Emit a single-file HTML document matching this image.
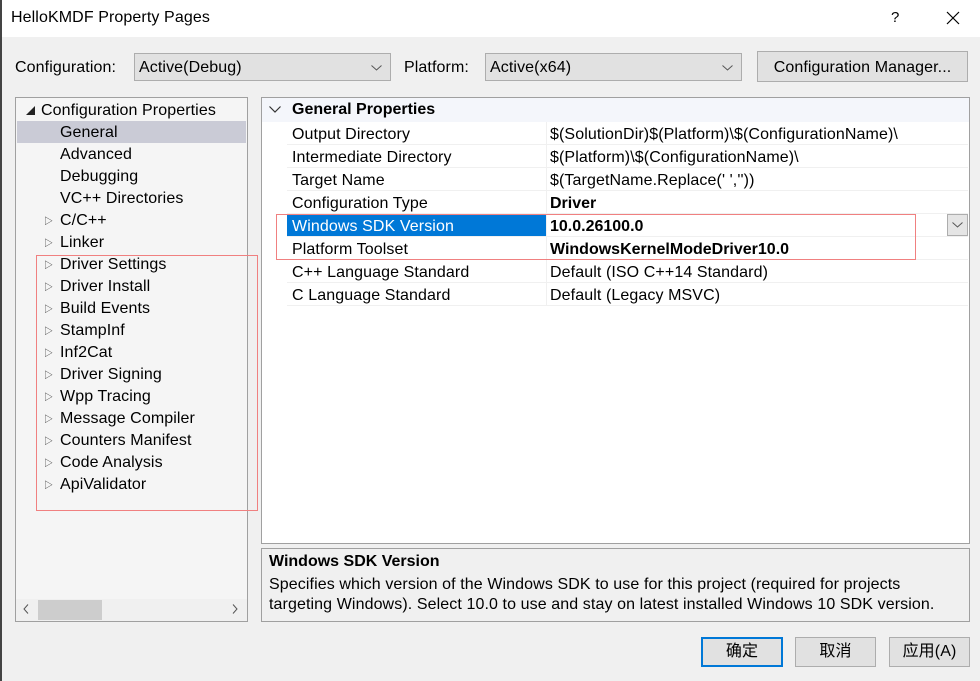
<!DOCTYPE html>
<html><head><meta charset="utf-8"><style>
*{box-sizing:border-box;margin:0;padding:0}
body{width:980px;height:681px;background:#f0f0f0;font-family:"Liberation Sans","Noto Sans CJK SC",sans-serif;font-size:16px;letter-spacing:0.1px;color:#000;position:relative;overflow:hidden}
.a{position:absolute;white-space:nowrap}
.combo{position:absolute;background:#e1e1e1;border:1px solid #adadad;height:28px;line-height:28px;padding-left:4px}
.combo svg{position:absolute;right:8px;top:11px}
.btn{position:absolute;background:#e1e1e1;border:1px solid #adadad;text-align:center}
.tr{position:absolute;left:60px;height:22px;line-height:24px}
.tri{position:absolute;left:44px;font-size:9px;color:#333}
.row{position:absolute;left:287px;width:681px;height:23px;line-height:25px;border-bottom:1px solid #f0f0f0}
.row .v{position:absolute;left:263px}
</style></head><body>
<div class="a" style="left:0;top:0;width:980px;height:37px;background:#fff"></div>
<div class="a" style="left:0;top:0;width:2px;height:681px;background:#444"></div>
<div class="a" style="left:11px;top:9px">HelloKMDF Property Pages</div>
<div class="a" style="left:891px;top:9px;font-size:15px">?</div>
<svg class="a" style="left:946px;top:11px" width="14" height="14"><path d="M1 1L13 13M13 1L1 13" stroke="#000" stroke-width="1.2"/></svg>

<div class="a" style="left:15px;top:59px">Configuration:</div>
<div class="combo" style="left:134px;top:53px;width:257px">Active(Debug)<svg width="11" height="6"><path d="M0.5 0.5L5.5 5L10.5 0.5" fill="none" stroke="#555"/></svg></div>
<div class="a" style="left:404px;top:59px">Platform:</div>
<div class="combo" style="left:485px;top:53px;width:257px">Active(x64)<svg width="11" height="6"><path d="M0.5 0.5L5.5 5L10.5 0.5" fill="none" stroke="#555"/></svg></div>
<div class="btn" style="left:757px;top:51px;width:211px;height:31px;line-height:31px">Configuration Manager...</div>

<div class="a" style="left:15px;top:97px;width:233px;height:525px;background:#f5f5f5;border:1px solid #a0a0a0"></div>
<div class="a" style="left:17px;top:121px;width:229px;height:22px;background:#cacbd6"></div>
<svg class="a" style="left:26px;top:106px" width="9" height="9"><path d="M9 0L9 9L0 9Z" fill="#222"/></svg>
<div class="tr" style="left:41px;top:99px">Configuration Properties</div>
<div class="tr" style="top:121px">General</div>
<div class="tr" style="top:143px">Advanced</div>
<div class="tr" style="top:165px">Debugging</div>
<div class="tr" style="top:187px">VC++ Directories</div>
<div class="tri" style="top:214px">▷</div><div class="tr" style="top:209px">C/C++</div>
<div class="tri" style="top:236px">▷</div><div class="tr" style="top:231px">Linker</div>
<div class="tri" style="top:258px">▷</div><div class="tr" style="top:253px">Driver Settings</div>
<div class="tri" style="top:280px">▷</div><div class="tr" style="top:275px">Driver Install</div>
<div class="tri" style="top:302px">▷</div><div class="tr" style="top:297px">Build Events</div>
<div class="tri" style="top:324px">▷</div><div class="tr" style="top:319px">StampInf</div>
<div class="tri" style="top:346px">▷</div><div class="tr" style="top:341px">Inf2Cat</div>
<div class="tri" style="top:368px">▷</div><div class="tr" style="top:363px">Driver Signing</div>
<div class="tri" style="top:390px">▷</div><div class="tr" style="top:385px">Wpp Tracing</div>
<div class="tri" style="top:412px">▷</div><div class="tr" style="top:407px">Message Compiler</div>
<div class="tri" style="top:434px">▷</div><div class="tr" style="top:429px;width:187px;overflow:hidden">Counters Manifest Preprocessor</div>
<div class="tri" style="top:456px">▷</div><div class="tr" style="top:451px">Code Analysis</div>
<div class="tri" style="top:478px">▷</div><div class="tr" style="top:473px">ApiValidator</div>
<div class="a" style="left:36px;top:255px;width:222px;height:256px;border:1px solid #f08080"></div>
<div class="a" style="left:16px;top:599px;width:231px;height:22px;background:#f0f0f0"></div>
<div class="a" style="left:38px;top:600px;width:64px;height:20px;background:#cdcdcd"></div>
<svg class="a" style="left:23px;top:604px" width="6" height="10"><path d="M5 0.5L1 5L5 9.5" fill="none" stroke="#555"/></svg>
<svg class="a" style="left:232px;top:604px" width="6" height="10"><path d="M1 0.5L5 5L1 9.5" fill="none" stroke="#555"/></svg>

<div class="a" style="left:261px;top:97px;width:709px;height:447px;background:#fff;border:1px solid #a0a0a0"></div>
<div class="a" style="left:262px;top:98px;width:707px;height:24px;background:#f4f6fb"></div>
<svg class="a" style="left:269px;top:106px" width="12" height="7"><path d="M0.5 0.5L6 6L11.5 0.5" fill="none" stroke="#333" stroke-width="1.2"/></svg>
<div class="a" style="left:292px;top:101px;font-weight:bold;letter-spacing:0">General Properties</div>
<div class="row" style="top:122px"><span style="margin-left:5px">Output Directory</span><span class="v">$(SolutionDir)$(Platform)\$(ConfigurationName)\</span></div>
<div class="row" style="top:145px"><span style="margin-left:5px">Intermediate Directory</span><span class="v">$(Platform)\$(ConfigurationName)\</span></div>
<div class="row" style="top:168px"><span style="margin-left:5px">Target Name</span><span class="v">$(TargetName.Replace(' ',''))</span></div>
<div class="row" style="top:191px"><span style="margin-left:5px">Configuration Type</span><span class="v" style="font-weight:bold;letter-spacing:0">Driver</span></div>
<div class="a" style="left:287px;top:214px;width:259px;height:22px;background:#0078d7"></div>
<div class="row" style="top:214px"><span style="margin-left:5px;color:#fff">Windows SDK Version</span><span class="v" style="font-weight:bold;letter-spacing:0">10.0.26100.0</span></div>
<div class="row" style="top:237px"><span style="margin-left:5px">Platform Toolset</span><span class="v" style="font-weight:bold;letter-spacing:0">WindowsKernelModeDriver10.0</span></div>
<div class="row" style="top:260px"><span style="margin-left:5px">C++ Language Standard</span><span class="v">Default (ISO C++14 Standard)</span></div>
<div class="row" style="top:283px"><span style="margin-left:5px">C Language Standard</span><span class="v">Default (Legacy MSVC)</span></div>
<div class="a" style="left:546px;top:122px;width:1px;height:184px;background:#f0f0f0"></div>
<div class="a" style="left:947px;top:214px;width:21px;height:22px;background:#e5e5e5;border:1px solid #adadad"></div>
<svg class="a" style="left:952px;top:222px" width="11" height="6"><path d="M0.5 0.5L5.5 5L10.5 0.5" fill="none" stroke="#555"/></svg>
<div class="a" style="left:276px;top:214px;width:640px;height:46px;border:1px solid #f08080"></div>

<div class="a" style="left:261px;top:548px;width:709px;height:74px;border:1px solid #a0a0a0;background:#f0f0f0"></div>
<div class="a" style="left:269px;top:553px;font-weight:bold;letter-spacing:0">Windows SDK Version</div>
<div class="a" style="left:269px;top:576px">Specifies which version of the Windows SDK to use for this project (required for projects</div>
<div class="a" style="left:269px;top:596px">targeting Windows). Select 10.0 to use and stay on latest installed Windows 10 SDK version.</div>

<div class="btn" style="left:701px;top:637px;width:82px;height:30px;line-height:26px;border:2px solid #0078d7">确定</div>
<div class="btn" style="left:795px;top:637px;width:81px;height:30px;line-height:28px">取消</div>
<div class="btn" style="left:889px;top:637px;width:81px;height:30px;line-height:28px">应用(A)</div>
</body></html>
